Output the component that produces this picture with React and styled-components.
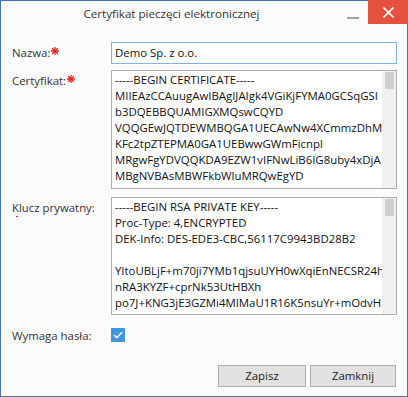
import React from "react";
import styled, { createGlobalStyle } from "styled-components";

const GlobalStyle = createGlobalStyle`
  html, body {
    margin: 0;
    padding: 0;
    background: #ffffff;
  }
  body {
    font-family: "Open Sans", "Noto Sans", "Liberation Sans", sans-serif;
    font-size: 11.4px;
    color: #333;
  }
`;

const Window = styled.div`
  width: 408px;
  height: 397px;
  box-sizing: border-box;
  border: 1px solid #3f75b1;
  background: #fbfbfb;
  display: flex;
  flex-direction: column;
`;

const TitleBar = styled.div`
  display: flex;
  height: 28px;
  flex-shrink: 0;
`;

const Title = styled.div`
  flex: 1;
  text-align: center;
  line-height: 26px;
  font-size: 11.6px;
  color: #333;
`;

const Controls = styled.div`
  display: flex;
  align-items: flex-start;
  margin-top: -1px;
  margin-right: -1px;
`;

const MinButton = styled.div`
  width: 21px;
  height: 24px;
  display: flex;
  justify-content: center;
  &::after {
    content: "";
    width: 12px;
    height: 2px;
    margin-top: 17px;
    background: #97a5a8;
  }
`;

const CloseButton = styled.div`
  width: 40px;
  height: 24px;
  margin-left: 5px;
  background: #e6503f;
  display: flex;
  align-items: center;
  justify-content: center;
`;

const Form = styled.div`
  flex: 1;
  display: grid;
  grid-template-columns: 99px 1fr;
  grid-template-rows: 22px 119px 120px 21px;
  row-gap: 6px;
  padding: 13px 10px 0 11px;
  align-content: start;
`;

const Label = styled.div`
  padding-top: ${(p) => p.$top ?? 3}px;
  line-height: 16px;
  color: #333;
  white-space: nowrap;
`;

const Star = styled.svg`
  width: 8px;
  height: 8px;
  vertical-align: top;
  margin-top: 2px;
  margin-left: 1px;
`;

const Mark = styled.div`
  width: 2px;
  height: 1px;
  margin: 0 0 0 4px;
  background: #e0301e;
`;

const Input = styled.div`
  border: 1px solid #7eb4ea;
  background: #fff;
  padding: 0 3px;
  line-height: 20px;
  color: #111;
`;

const Area = styled.div`
  display: flex;
  border: 1px solid #abadb3;
  background: #fff;
  overflow: hidden;
  margin-top: ${(p) => p.$mt || 0}px;
`;

const AreaText = styled.div`
  flex: 1;
  padding: 1px 3px;
  line-height: 16px;
  color: #111;
  white-space: pre;
  overflow: hidden;
`;

const ScrollTrack = styled.div`
  width: 14px;
  background: #f0f0f0;
  display: flex;
  justify-content: center;
  padding-top: 1px;
`;

const ScrollThumb = styled.div`
  width: 9px;
  height: 17px;
  background: #cdcdcd;
`;

const CheckBox = styled.div`
  width: 14px;
  height: 14px;
  margin-top: 7px;
  background: #3d96df;
  display: flex;
  align-items: center;
  justify-content: center;
`;

const Footer = styled.div`
  display: flex;
  justify-content: flex-end;
  gap: 4px;
  padding: 0 11px 9px 0;
`;

const Button = styled.div`
  width: ${(p) => p.$w}px;
  height: 20px;
  border: 1px solid #adadad;
  background: #e1e1e1;
  color: #222;
  text-align: center;
  line-height: 20px;
`;

const Asterisk = () => (
  <Star viewBox="0 0 8 8">
    <g stroke="#e0201b" strokeWidth="1.3" strokeLinecap="round">
      <line x1="4" y1="0.5" x2="4" y2="7.5" />
      <line x1="0.5" y1="4" x2="7.5" y2="4" />
      <line x1="1.5" y1="1.5" x2="6.5" y2="6.5" />
      <line x1="6.5" y1="1.5" x2="1.5" y2="6.5" />
    </g>
  </Star>
);

const certLines = [
  "-----BEGIN CERTIFICATE-----",
  "MIIEAzCCAuugAwIBAgIJAIgk4VGiKjFYMA0GCSqGSI",
  "b3DQEBBQUAMIGXMQswCQYD",
  "VQQGEwJQTDEWMBQGA1UECAwNw4XCmmzDhM",
  "KFc2tpZTEPMA0GA1UEBwwGWmFicnpl",
  "MRgwFgYDVQQKDA9EZW1vIFNwLiB6IG8uby4xDjA",
  "MBgNVBAsMBWFkbWluMRQwEgYD",
  "VQQDDAtEZW1vIENlcnRzMS0wKwYJKoZIhvcNAQ",
];

const keyLines = [
  "-----BEGIN RSA PRIVATE KEY-----",
  "Proc-Type: 4,ENCRYPTED",
  "DEK-Info: DES-EDE3-CBC,56117C9943BD28B2",
  "",
  "YItoUBLjF+m70ji7YMb1qjsuUYH0wXqiEnNECSR24h",
  "nRA3KYZF+cprNk53UtHBXh",
  "po7J+KNG3jE3GZMi4MIMaU1R16K5nsuYr+mOdvH",
  "nvsLdk0RRUWkXTqP3Q9mnkl+aUy",
];

export default function App() {
  return (
    <>
      <GlobalStyle />
      <Window>
        <TitleBar>
          <Title>Certyfikat pieczęci elektronicznej</Title>
          <Controls>
            <MinButton />
            <CloseButton>
              <svg width="11" height="11" viewBox="0 0 11 11">
                <g stroke="#fff" strokeWidth="1.6">
                  <line x1="0.5" y1="0.5" x2="10.5" y2="10.5" />
                  <line x1="10.5" y1="0.5" x2="0.5" y2="10.5" />
                </g>
              </svg>
            </CloseButton>
          </Controls>
        </TitleBar>

        <Form>
          <Label>
            Nazwa:
            <Asterisk />
          </Label>
          <Input>Demo Sp. z o.o.</Input>

          <Label>
            Certyfikat:
            <Asterisk />
          </Label>
          <Area>
            <AreaText>{certLines.join("\n")}</AreaText>
            <ScrollTrack>
              <ScrollThumb />
            </ScrollTrack>
          </Area>

          <Label $top={5}>
            Klucz prywatny:
            <Mark />
          </Label>
          <Area $mt={2}>
            <AreaText>{keyLines.join("\n")}</AreaText>
            <ScrollTrack>
              <ScrollThumb />
            </ScrollTrack>
          </Area>

          <Label $top={7}>Wymaga hasła:</Label>
          <CheckBox>
            <svg width="10" height="8" viewBox="0 0 10 8">
              <polyline
                points="1,4 3.8,6.6 9,1.2"
                fill="none"
                stroke="#fff"
                strokeWidth="1.5"
              />
            </svg>
          </CheckBox>
        </Form>

        <Footer>
          <Button $w={86}>Zapisz</Button>
          <Button $w={84}>Zamknij</Button>
        </Footer>
      </Window>
    </>
  );
}
